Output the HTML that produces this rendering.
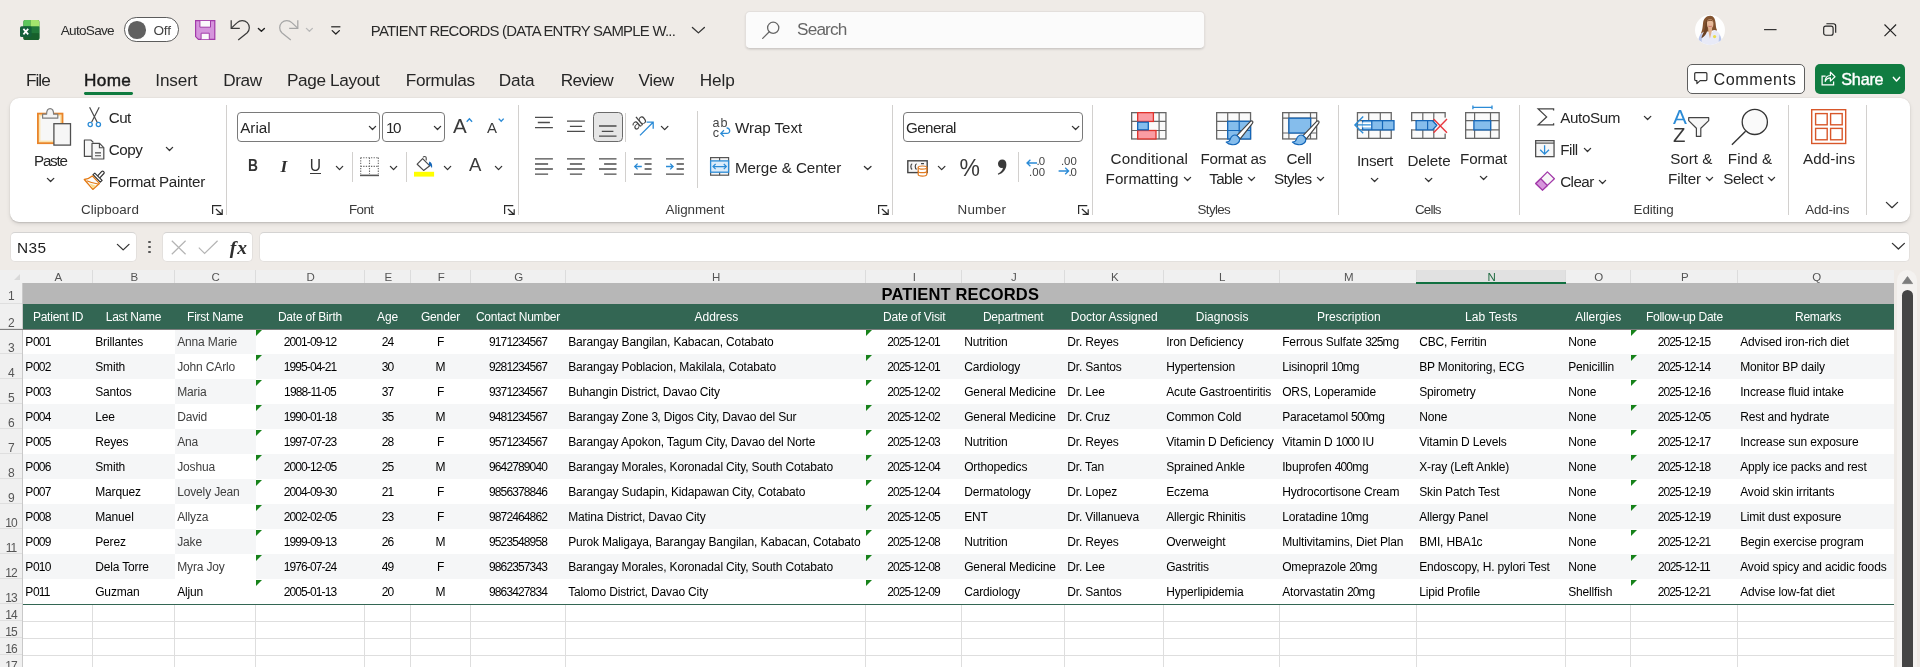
<!DOCTYPE html>
<html lang="en"><head><meta charset="utf-8"><title>PATIENT RECORDS - Excel</title>
<style>
html,body{margin:0;padding:0}
body{will-change:transform;width:1920px;height:667px;overflow:hidden;position:relative;background:#efebe7;font-family:"Liberation Sans",sans-serif;color:#262626}
.t{position:absolute;white-space:nowrap;display:block}
.a{position:absolute;display:block}
svg{position:absolute;overflow:visible}
.sep{position:absolute;width:1px;background:#d6d3d0}
.box{position:absolute;box-sizing:border-box;background:#fff;border:1px solid #8a8886;border-radius:4px}
/* grid */
#grid{position:absolute;left:0;top:270px;width:1920px;height:397px;overflow:hidden}
.ch{position:absolute;top:0;height:13px;line-height:15.5px;font-size:11.5px;color:#555;padding-left:1.5px;text-align:center;background:#f0f0f0;box-sizing:border-box;border-right:1px solid #dcdcdc;overflow:hidden}
.rh{position:absolute;left:0;width:22px;box-sizing:border-box;color:#555;font-size:12px;text-align:center;background:#f0f0f0;border-bottom:1px solid #dfdfdf;letter-spacing:-0.9px}
.rh span{position:absolute;left:0;right:0;bottom:-0.7px;line-height:11px}
.c{position:absolute;box-sizing:border-box;height:25px;line-height:27px;font-size:12px;white-space:nowrap;overflow:hidden;color:#000;padding:0 2.2px;letter-spacing:-0.15px}
.hd{color:#fff;text-align:center;background:#336653}
.ctr{text-align:center}
.band{background:#f5f6f7}
.gc{color:#404040}
.tri{position:absolute;width:0;height:0;border-top:6px solid #17821a;border-right:6px solid transparent}
.gl{position:absolute;background:#dedede}

.c i{font-style:normal;letter-spacing:-0.87px}
.hd{letter-spacing:-0.28px}

</style></head>
<body>
<svg style="left:19.8px;top:20px" width="19.4" height="20" viewBox="0 0 19.4 20" >
<path d="M5.2 0H17.6a1.8 1.8 0 0 1 1.8 1.8V18.2a1.8 1.8 0 0 1-1.8 1.8H5.2a1.8 1.8 0 0 1-1.8-1.8V1.8A1.8 1.8 0 0 1 5.2 0Z" fill="#1e6c30"/>
<path d="M5.2 0H10.6V6.6H3.4V1.8A1.8 1.8 0 0 1 5.2 0Z" fill="#5dc65c"/>
<path d="M10.6 0H17.6a1.8 1.8 0 0 1 1.8 1.8V6.6H10.6Z" fill="#a4e56d"/>
<path d="M10.6 6.6H19.4V13.2H10.6Z" fill="#21793a"/>
<path d="M3.4 13.2H19.4V18.2a1.8 1.8 0 0 1-1.8 1.8H5.2a1.8 1.8 0 0 1-1.8-1.8Z" fill="#17602c"/>
<rect x="0" y="6.2" width="11.6" height="10.8" rx="1.6" fill="#14603a"/>
<path d="M3.4 8.9 L8.2 14.4 M8.2 8.9 L3.4 14.4" stroke="#fff" stroke-width="1.7" fill="none"/>
</svg>
<div class="a" style="left:124px;top:17.2px;width:55px;height:24.4px;box-sizing:border-box;border:1.3px solid #5c5c5c;border-radius:12.2px;background:#fff"></div>
<div class="a" style="left:128.1px;top:21px;width:17.6px;height:17.6px;border-radius:50%;background:#616161"></div>
<svg style="left:194.8px;top:20px" width="20.4" height="20" viewBox="0 0 20.4 20" >
<path d="M0.6 0.6H19.8V19.4H3.4L0.6 16.6Z" fill="#d594dc" stroke="#a23aa9" stroke-width="1.2" stroke-linejoin="miter"/>
<rect x="4.9" y="0.9" width="10.6" height="6.3" fill="#fbf7fb"/>
<rect x="6.1" y="13.2" width="8.2" height="6" fill="#fbf7fb"/>
<path d="M4.9 0.9V7.2H15.5V0.9 M6.1 19.2V13.2H14.3V19.2" fill="none" stroke="#a23aa9" stroke-width="1"/>
</svg>
<svg style="left:230px;top:19px" width="21" height="22" viewBox="0 0 21 22" >
<path d="M1.2 1.2V9.4H9.8" fill="none" stroke="#3a3a3a" stroke-width="1.25" stroke-linejoin="miter"/>
<path d="M1.6 8.9 L7.2 3.6 A7.1 7.1 0 0 1 17.2 13.7 L8.2 20.9" fill="none" stroke="#3a3a3a" stroke-width="1.25" stroke-linecap="butt"/>
</svg>
<svg style="left:258.1px;top:27.6px" width="6.8" height="3.8" viewBox="0 0 6.8 3.8" ><path d="M0.4 0.4 L3.4 3.3 L6.3999999999999995 0.4" fill="none" stroke="#222" stroke-width="1.4" stroke-linecap="round" stroke-linejoin="round"/></svg>
<svg style="left:278px;top:19px" width="21" height="22" viewBox="0 0 21 22" >
<path d="M19.8 1.2V9.4H11.2" fill="none" stroke="#a6a6a6" stroke-width="1.25"/>
<path d="M19.4 8.9 L13.8 3.6 A7.1 7.1 0 0 0 3.8 13.7 L12.8 20.9" fill="none" stroke="#a6a6a6" stroke-width="1.25"/>
</svg>
<svg style="left:305.9px;top:27.6px" width="6.8" height="3.8" viewBox="0 0 6.8 3.8" ><path d="M0.4 0.4 L3.4 3.3 L6.3999999999999995 0.4" fill="none" stroke="#b9b9b9" stroke-width="1.3" stroke-linecap="round" stroke-linejoin="round"/></svg>
<svg style="left:330.6px;top:26.4px" width="9.6" height="9" viewBox="0 0 9.6 9" ><path d="M0.2 0.8H9.4" stroke="#222" stroke-width="1.2"/><path d="M1.2 4.6 L4.8 8 L8.4 4.6" fill="none" stroke="#222" stroke-width="1.3" stroke-linecap="round" stroke-linejoin="round"/></svg>
<svg style="left:691.5px;top:27.2px" width="12.8" height="6.4" viewBox="0 0 12.8 6.4" ><path d="M0.4 0.4 L6.4 5.9 L12.4 0.4" fill="none" stroke="#333" stroke-width="1.3" stroke-linecap="round" stroke-linejoin="round"/></svg>
<div class="a" style="left:745px;top:10.5px;width:459.5px;height:38.5px;box-sizing:border-box;background:#fbfbfb;border:1px solid #e3dfdc;border-bottom-color:#cfcbc8;border-radius:5px;box-shadow:0 1px 2px rgba(0,0,0,0.10)"></div>
<svg style="left:762px;top:21px" width="18" height="18" viewBox="0 0 18 18" ><circle cx="11.2" cy="6.8" r="5.6" fill="none" stroke="#666" stroke-width="1.3"/><path d="M7.3 10.8 L0.7 17.4" stroke="#666" stroke-width="1.3" stroke-linecap="round"/></svg>
<svg style="left:1695.1px;top:15.1px" width="30" height="30" viewBox="0 0 30 30" >
<defs><clipPath id="av"><circle cx="15" cy="15" r="15"/></clipPath></defs>
<g clip-path="url(#av)">
<rect width="30" height="30" fill="#fefefe"/>
<path d="M15.3 0.8C11 0.8 8.4 4 8 8.5C7.6 12.5 7.5 14 6.6 16.5C5.6 19 5.2 21.6 6.4 23.4C8.6 22.2 10.6 19.6 11.6 17L19.4 15C21 15.7 21.9 15.7 22.1 15.2C20.8 13 20.9 10.5 20.6 8C20.2 3.8 18.5 0.8 15.3 0.8Z" fill="#83532f"/>
<path d="M2.6 30C2.8 22 5.4 17.4 11.6 15.7L14.9 19.6L19.4 15.1C24.6 16.7 26.8 21 26.9 30Z" fill="#e8eaf7"/>
<path d="M3.6 25C4 21.6 5.4 19 7.4 17.6L6.6 27ZM24.4 19.4C26 21.6 26.6 24.4 26.6 27.6L23.6 26.6Z" fill="#b9c6ea"/>
<path d="M13 12.6H17.2L16.9 16L14.9 23.8L13.4 16.4Z" fill="#e0b08e"/>
<ellipse cx="15.1" cy="8.8" rx="3.3" ry="4.6" fill="#e7ba9a"/>
<path d="M12.2 6.8C13.6 5.6 16.4 5.4 18 6.6C17.4 4.4 13.2 4 12.2 6.8Z" fill="#7a4a2a"/>
<path d="M13.4 11.2C14.4 11.9 15.8 11.9 16.8 11.2C15.8 11.5 14.4 11.5 13.4 11.2Z" fill="#c56a68" stroke="#c56a68" stroke-width="0.5"/>
<path d="M11.9 4.2C10 8 10.7 13 8.7 17C7.6 19.4 6.4 21.6 6.6 23.3C9.5 21.6 11.7 18.6 12.3 15.5C12.8 13 11.6 9 11.9 4.2Z" fill="#6b4225"/>
<circle cx="19.6" cy="21.6" r="1.6" fill="#e9dc4e"/>
</g></svg>
<svg style="left:1763.5px;top:28.6px" width="13" height="1.4" viewBox="0 0 13 1.4" ><rect width="12.6" height="1.1" y="0.1" fill="#222"/></svg>
<svg style="left:1823px;top:23.3px" width="13.4" height="13" viewBox="0 0 13.4 13" ><rect x="0.7" y="3.1" width="9.4" height="9.2" rx="2" fill="none" stroke="#222" stroke-width="1.15"/><path d="M3.4 0.7H10.4a2.3 2.3 0 0 1 2.3 2.3V9.8" fill="none" stroke="#222" stroke-width="1.15"/></svg>
<svg style="left:1884px;top:23.8px" width="12.6" height="12.6" viewBox="0 0 12.6 12.6" ><path d="M0.5 0.5L12.1 12.1M12.1 0.5L0.5 12.1" stroke="#222" stroke-width="1.15"/></svg>
<div class="a" style="left:84.4px;top:91.8px;width:48.4px;height:2.8px;border-radius:1.4px;background:#0f7b3f"></div>
<div class="a" style="left:1687.2px;top:64.1px;width:117.8px;height:29.5px;box-sizing:border-box;border:1px solid #5e5e5e;border-radius:5px;background:#fff"></div>
<svg style="left:1693.6px;top:72px" width="13.6" height="12.4" viewBox="0 0 13.6 12.4" ><path d="M1.7 0.7H11.9a1 1 0 0 1 1 1V7.6a1 1 0 0 1-1 1H6.1L2.9 11.6V8.6H1.7a1 1 0 0 1-1-1V1.7a1 1 0 0 1 1-1Z" fill="none" stroke="#333" stroke-width="1.2" stroke-linejoin="round"/></svg>
<div class="a" style="left:1815px;top:64.1px;width:90px;height:29.5px;border-radius:5px;background:#107c41"></div>
<svg style="left:1820.6px;top:71.4px" width="14.6" height="14.8" viewBox="0 0 14.6 14.8" ><path d="M4.6 5.2H1.1V14H12.6V10.6" fill="none" stroke="#fff" stroke-width="1.25"/><path d="M4.2 10.4C4.4 6.6 6.6 4.5 9.4 4.5V1.2L14 5.7L9.4 10.1V6.9C7.2 6.9 5.4 8 4.2 10.4Z" fill="none" stroke="#fff" stroke-width="1.2" stroke-linejoin="round"/></svg>
<svg style="left:1893px;top:77.2px" width="7" height="4.4" viewBox="0 0 7 4.4" ><path d="M0.4 0.4 L3.5 3.9000000000000004 L6.6 0.4" fill="none" stroke="#fff" stroke-width="1.5" stroke-linecap="round" stroke-linejoin="round"/></svg>
<div class="a" style="left:10px;top:98px;width:1900px;height:123.5px;background:#fff;border-radius:9px;box-shadow:0 2px 4px rgba(0,0,0,0.10),0 0.5px 1.5px rgba(0,0,0,0.14)"></div>
<svg style="left:46.8px;top:177.6px" width="7.2" height="4" viewBox="0 0 7.2 4" ><path d="M0.4 0.4 L3.6 3.5 L6.8 0.4" fill="none" stroke="#333" stroke-width="1.3" stroke-linecap="round" stroke-linejoin="round"/></svg>
<svg style="left:165.8px;top:147.4px" width="7" height="4" viewBox="0 0 7 4" ><path d="M0.4 0.4 L3.5 3.5 L6.6 0.4" fill="none" stroke="#333" stroke-width="1.3" stroke-linecap="round" stroke-linejoin="round"/></svg>
<div class="sep" style="left:226px;top:105px;height:110.0px;background:#d2d0ce"></div>
<div class="box" style="left:237.3px;top:112.2px;width:142.4px;height:29.6px;border-color:#7a7a7a"></div>
<svg style="left:369.2px;top:125.6px" width="7" height="4" viewBox="0 0 7 4" ><path d="M0.4 0.4 L3.5 3.5 L6.6 0.4" fill="none" stroke="#333" stroke-width="1.3" stroke-linecap="round" stroke-linejoin="round"/></svg>
<div class="box" style="left:382.2px;top:112.2px;width:62.4px;height:29.6px;border-color:#7a7a7a"></div>
<svg style="left:434.2px;top:125.6px" width="7" height="4" viewBox="0 0 7 4" ><path d="M0.4 0.4 L3.5 3.5 L6.6 0.4" fill="none" stroke="#333" stroke-width="1.3" stroke-linecap="round" stroke-linejoin="round"/></svg>
<div class="sep" style="left:352px;top:152.4px;height:29.3px;background:#d2d0ce"></div>
<div class="sep" style="left:406px;top:152.4px;height:29.3px;background:#d2d0ce"></div>
<div class="sep" style="left:518px;top:105px;height:110.0px;background:#d2d0ce"></div>
<div class="a" style="left:593px;top:112.4px;width:29.8px;height:29.4px;box-sizing:border-box;background:#e6e6e6;border:1px solid #6a6a6a;border-radius:4.5px"></div>
<div class="sep" style="left:625px;top:112.5px;height:29.2px;background:#d2d0ce"></div>
<div class="sep" style="left:625px;top:152px;height:30.0px;background:#d2d0ce"></div>
<div class="sep" style="left:697px;top:111px;height:77.0px;background:#d2d0ce"></div>
<svg style="left:863.6px;top:165.6px" width="7.4" height="4" viewBox="0 0 7.4 4" ><path d="M0.4 0.4 L3.7 3.5 L7.0 0.4" fill="none" stroke="#333" stroke-width="1.3" stroke-linecap="round" stroke-linejoin="round"/></svg>
<div class="sep" style="left:892px;top:105px;height:110.0px;background:#d2d0ce"></div>
<div class="box" style="left:903.4px;top:112.4px;width:179.4px;height:29.4px;border-color:#7a7a7a"></div>
<svg style="left:1071.6px;top:125.6px" width="7.2" height="4" viewBox="0 0 7.2 4" ><path d="M0.4 0.4 L3.6 3.5 L6.8 0.4" fill="none" stroke="#333" stroke-width="1.3" stroke-linecap="round" stroke-linejoin="round"/></svg>
<div class="sep" style="left:1018px;top:152px;height:30.0px;background:#d2d0ce"></div>
<div class="sep" style="left:1092px;top:105px;height:110.0px;background:#d2d0ce"></div>
<svg style="left:1183.6px;top:176.6px" width="7" height="4" viewBox="0 0 7 4" ><path d="M0.4 0.4 L3.5 3.5 L6.6 0.4" fill="none" stroke="#333" stroke-width="1.3" stroke-linecap="round" stroke-linejoin="round"/></svg>
<svg style="left:1248.4px;top:176.6px" width="7" height="4" viewBox="0 0 7 4" ><path d="M0.4 0.4 L3.5 3.5 L6.6 0.4" fill="none" stroke="#333" stroke-width="1.3" stroke-linecap="round" stroke-linejoin="round"/></svg>
<svg style="left:1317.2px;top:176.6px" width="7" height="4" viewBox="0 0 7 4" ><path d="M0.4 0.4 L3.5 3.5 L6.6 0.4" fill="none" stroke="#333" stroke-width="1.3" stroke-linecap="round" stroke-linejoin="round"/></svg>
<div class="sep" style="left:1338px;top:105px;height:110.0px;background:#d2d0ce"></div>
<svg style="left:1370.8px;top:177.6px" width="7.2" height="4" viewBox="0 0 7.2 4" ><path d="M0.4 0.4 L3.6 3.5 L6.8 0.4" fill="none" stroke="#333" stroke-width="1.3" stroke-linecap="round" stroke-linejoin="round"/></svg>
<svg style="left:1425px;top:177.6px" width="7.2" height="4" viewBox="0 0 7.2 4" ><path d="M0.4 0.4 L3.6 3.5 L6.8 0.4" fill="none" stroke="#333" stroke-width="1.3" stroke-linecap="round" stroke-linejoin="round"/></svg>
<svg style="left:1479.6px;top:175.8px" width="7.2" height="4" viewBox="0 0 7.2 4" ><path d="M0.4 0.4 L3.6 3.5 L6.8 0.4" fill="none" stroke="#333" stroke-width="1.3" stroke-linecap="round" stroke-linejoin="round"/></svg>
<div class="sep" style="left:1519px;top:105px;height:110.0px;background:#d2d0ce"></div>
<svg style="left:1644px;top:115.6px" width="7.2" height="4" viewBox="0 0 7.2 4" ><path d="M0.4 0.4 L3.6 3.5 L6.8 0.4" fill="none" stroke="#333" stroke-width="1.3" stroke-linecap="round" stroke-linejoin="round"/></svg>
<svg style="left:1584px;top:147.6px" width="7" height="4" viewBox="0 0 7 4" ><path d="M0.4 0.4 L3.5 3.5 L6.6 0.4" fill="none" stroke="#333" stroke-width="1.3" stroke-linecap="round" stroke-linejoin="round"/></svg>
<svg style="left:1599.2px;top:179.6px" width="7" height="4" viewBox="0 0 7 4" ><path d="M0.4 0.4 L3.5 3.5 L6.6 0.4" fill="none" stroke="#333" stroke-width="1.3" stroke-linecap="round" stroke-linejoin="round"/></svg>
<svg style="left:1705.6px;top:176.6px" width="7" height="4" viewBox="0 0 7 4" ><path d="M0.4 0.4 L3.5 3.5 L6.6 0.4" fill="none" stroke="#333" stroke-width="1.3" stroke-linecap="round" stroke-linejoin="round"/></svg>
<svg style="left:1768px;top:176.6px" width="7" height="4" viewBox="0 0 7 4" ><path d="M0.4 0.4 L3.5 3.5 L6.6 0.4" fill="none" stroke="#333" stroke-width="1.3" stroke-linecap="round" stroke-linejoin="round"/></svg>
<div class="sep" style="left:1788px;top:105px;height:110.0px;background:#d2d0ce"></div>
<div class="sep" style="left:1866px;top:105px;height:110.0px;background:#d2d0ce"></div>
<svg style="left:1885.8px;top:202px" width="12" height="6.2" viewBox="0 0 12 6.2" ><path d="M0.4 0.4 L6.0 5.7 L11.6 0.4" fill="none" stroke="#333" stroke-width="1.3" stroke-linecap="round" stroke-linejoin="round"/></svg>
<svg style="left:36px;top:107px" width="36" height="40" viewBox="0 0 36 40" >
<rect x="1.9" y="6.6" width="24.6" height="29.6" fill="#fbe3ae" stroke="#e9842a" stroke-width="1.8"/>
<rect x="4.4" y="9.2" width="19.6" height="24.4" fill="#f7f7f7"/>
<path d="M6.6 11.2V7.2H10.6C10.6 3.4 11.8 1.6 14.1 1.6C16.4 1.6 17.6 3.4 17.6 7.2H21.8V11.2Z" fill="#f4f4f4" stroke="#7d7d7d" stroke-width="1.2" stroke-linejoin="round"/>
<rect x="17.9" y="16.7" width="16.6" height="21.4" fill="#f6f6f6" stroke="#505050" stroke-width="1.3"/>
</svg>
<svg style="left:87px;top:106px" width="15" height="22" viewBox="0 0 15 22" >
<path d="M2.6 1.2L10.2 16.2M12.2 1.2L4.6 16.2" stroke="#4a4a4a" stroke-width="1.2" fill="none"/>
<circle cx="3.2" cy="18.5" r="2.1" fill="#fff" stroke="#2b8bd6" stroke-width="1.3"/>
<circle cx="11.4" cy="18.5" r="2.1" fill="#fff" stroke="#2b8bd6" stroke-width="1.3"/>
</svg>
<svg style="left:83px;top:138.5px" width="22" height="21" viewBox="0 0 22 21" >
<path d="M8.6 17.4H1.4V1H7.8L10.4 3.4" fill="#f7f7f7" stroke="#4a4a4a" stroke-width="1.2" stroke-linejoin="round"/>
<path d="M9 4.4H16.6L20.8 8.6V20H9Z" fill="#f7f7f7" stroke="#4a4a4a" stroke-width="1.2" stroke-linejoin="round"/>
<path d="M16.4 4.6V8.8H20.6" fill="none" stroke="#4a4a4a" stroke-width="1.1"/>
<path d="M12 13.9H18M12 16.7H18" stroke="#4a4a4a" stroke-width="1.1"/>
</svg>
<svg style="left:83px;top:170px" width="22" height="21" viewBox="0 0 22 21" >
<path d="M9.3 5.9C6.6 8.1 3.9 9.2 1.3 9.5L9.8 19.4L16.4 13.4Z" fill="#fbfbfb" stroke="#e47a12" stroke-width="1.3" stroke-linejoin="round"/>
<path d="M6.6 13.6L13 15.8L9.8 18.6Z" fill="#fbdc8c"/>
<path d="M3.6 10.8C7.6 12.6 11.4 13.6 15.2 14" fill="none" stroke="#e47a12" stroke-width="1.1"/>
<path d="M14.6 5.8L18.8 1.4C19.9 0.3 22 2.4 20.9 3.5L16.8 7.9" fill="#fff" stroke="#333" stroke-width="1.2" stroke-linejoin="round"/>
<path d="M10 4.6L11.8 3.1L19.1 10.4L17.3 12.2Z" fill="#fff" stroke="#333" stroke-width="1.2" stroke-linejoin="round"/>
</svg>
<svg style="left:212.3px;top:204.9px" width="11" height="10.4" viewBox="0 0 11 10.4" ><path d="M0.6 9V0.6H9.3" fill="none" stroke="#2a2a2a" stroke-width="1.2"/><path d="M3.9 4L10 9.5M4.6 9.4H10.2V4.2" fill="none" stroke="#2a2a2a" stroke-width="1.2"/></svg>
<svg style="left:504.3px;top:204.9px" width="11" height="10.4" viewBox="0 0 11 10.4" ><path d="M0.6 9V0.6H9.3" fill="none" stroke="#2a2a2a" stroke-width="1.2"/><path d="M3.9 4L10 9.5M4.6 9.4H10.2V4.2" fill="none" stroke="#2a2a2a" stroke-width="1.2"/></svg>
<svg style="left:878.3px;top:204.9px" width="11" height="10.4" viewBox="0 0 11 10.4" ><path d="M0.6 9V0.6H9.3" fill="none" stroke="#2a2a2a" stroke-width="1.2"/><path d="M3.9 4L10 9.5M4.6 9.4H10.2V4.2" fill="none" stroke="#2a2a2a" stroke-width="1.2"/></svg>
<svg style="left:1078.1px;top:204.9px" width="11" height="10.4" viewBox="0 0 11 10.4" ><path d="M0.6 9V0.6H9.3" fill="none" stroke="#2a2a2a" stroke-width="1.2"/><path d="M3.9 4L10 9.5M4.6 9.4H10.2V4.2" fill="none" stroke="#2a2a2a" stroke-width="1.2"/></svg>
<svg style="left:465.6px;top:118.4px" width="7" height="4.4" viewBox="0 0 7 4.4" ><path d="M0.7 3.8L3.4 0.8L6.1 3.8" fill="none" stroke="#2b8bd6" stroke-width="1.4"/></svg>
<svg style="left:497.6px;top:118.4px" width="6.6" height="4" viewBox="0 0 6.6 4" ><path d="M0.7 0.6L3.2 3.3L5.7 0.6" fill="none" stroke="#2b8bd6" stroke-width="1.4"/></svg>
<div class="a" style="left:309.8px;top:173.1px;width:11.4px;height:1.3px;background:#3a3a3a"></div>
<svg style="left:335.9px;top:165.6px" width="7.1" height="4.1" viewBox="0 0 7.1 4.1" ><path d="M0.4 0.4 L3.55 3.5999999999999996 L6.699999999999999 0.4" fill="none" stroke="#333" stroke-width="1.3" stroke-linecap="round" stroke-linejoin="round"/></svg>
<svg style="left:360px;top:157px" width="19" height="19.4" viewBox="0 0 19 19.4" >
<path d="M0.6 0.7H18.4M0.6 9.4H18.4M0.7 0.6V17M9.5 0.6V17M18.3 0.6V17" fill="none" stroke="#6b6b6b" stroke-width="1.1" stroke-dasharray="1.3 1.3"/>
<path d="M0 18.4H19" stroke="#555" stroke-width="1.6"/>
</svg>
<svg style="left:389.5px;top:165.6px" width="7.1" height="4.1" viewBox="0 0 7.1 4.1" ><path d="M0.4 0.4 L3.55 3.5999999999999996 L6.699999999999999 0.4" fill="none" stroke="#333" stroke-width="1.3" stroke-linecap="round" stroke-linejoin="round"/></svg>
<svg style="left:414px;top:156.4px" width="21" height="21" viewBox="0 0 21 21" >
<path d="M9.2 1.6C9.2 0.2 12.2 0.2 12.2 1.8V4.6" fill="none" stroke="#4a4a4a" stroke-width="1.1"/>
<path d="M8.6 2.6L15.8 9.8L9.6 14.4L3.2 8.2Z" fill="#fff" stroke="#4a4a4a" stroke-width="1.2" stroke-linejoin="round"/>
<path d="M15.4 5.4C17.8 6.4 18.6 9 18 12.2C17 10.6 16.2 9.6 14.6 8.6Z" fill="#1466b8"/>
<rect x="0" y="15.8" width="20.1" height="4.8" fill="#ffff00"/>
</svg>
<svg style="left:443.9px;top:165.6px" width="7.1" height="4.1" viewBox="0 0 7.1 4.1" ><path d="M0.4 0.4 L3.55 3.5999999999999996 L6.699999999999999 0.4" fill="none" stroke="#333" stroke-width="1.3" stroke-linecap="round" stroke-linejoin="round"/></svg>
<svg style="left:494.8px;top:165.6px" width="7.1" height="4.1" viewBox="0 0 7.1 4.1" ><path d="M0.4 0.4 L3.55 3.5999999999999996 L6.699999999999999 0.4" fill="none" stroke="#333" stroke-width="1.3" stroke-linecap="round" stroke-linejoin="round"/></svg>
<svg style="left:534.9px;top:116px" width="18" height="18" viewBox="0 0 18 18" ><path d="M0 1.4H17.9M2.8 6.5H14.9M0 11.7H17.9" stroke="#4c4c4c" stroke-width="1.3" fill="none"/></svg>
<svg style="left:567px;top:120px" width="18" height="18" viewBox="0 0 18 18" ><path d="M0 1.2H17.9M2.9 6.3H15.1M0 11.4H17.9" stroke="#4c4c4c" stroke-width="1.3" fill="none"/></svg>
<svg style="left:599.2px;top:124px" width="18" height="18" viewBox="0 0 18 18" ><path d="M0 2H17.5M2.8 7.4H14.4M0 12.2H17.5" stroke="#4c4c4c" stroke-width="1.3" fill="none"/></svg>
<svg style="left:534.9px;top:157px" width="18" height="19" viewBox="0 0 18 19" ><path d="M0 1.9H17.9M0 7H13.1M0 12H17.9M0 17.1H13.1" stroke="#4c4c4c" stroke-width="1.4" fill="none"/></svg>
<svg style="left:567px;top:157px" width="18" height="19" viewBox="0 0 18 19" ><path d="M0 1.9H17.9M2.9 7H15.1M0 12H17.9M2.9 17.1H15.1" stroke="#4c4c4c" stroke-width="1.4" fill="none"/></svg>
<svg style="left:599.2px;top:157px" width="18" height="19" viewBox="0 0 18 19" ><path d="M0 1.9H17.5M5.1 7H17.5M0 12H17.5M5.1 17.1H17.5" stroke="#4c4c4c" stroke-width="1.4" fill="none"/></svg>
<svg style="left:634.2px;top:157px" width="18" height="19" viewBox="0 0 18 19" ><path d="M0 1.9H17.6M10.6 7H17.6M10.6 12H17.6M0 17.1H17.6" stroke="#4c4c4c" stroke-width="1.4" fill="none"/><path d="M7.8 9.5H0.8M3.6 6.6L0.7 9.5L3.6 12.4" fill="none" stroke="#2b8bd6" stroke-width="1.3"/></svg>
<svg style="left:666px;top:157px" width="18" height="19" viewBox="0 0 18 19" ><path d="M0 1.9H17.9M10.6 7H17.9M10.6 12H17.9M0 17.1H17.9" stroke="#4c4c4c" stroke-width="1.4" fill="none"/><path d="M0 9.5H7M4.2 6.6L7.1 9.5L4.2 12.4" fill="none" stroke="#2b8bd6" stroke-width="1.3"/></svg>
<span class="t" style="left:631.4px;top:115px;font-size:14.6px;line-height:15px;color:#444;transform:rotate(-40deg);transform-origin:50% 50%;letter-spacing:-0.5px">ab</span>
<svg style="left:638.6px;top:121px" width="16" height="16" viewBox="0 0 16 16" ><path d="M1 14.4L13.6 1.8M7.6 1.2H14.2V7.8" fill="none" stroke="#2b8bd6" stroke-width="1.3"/></svg>
<svg style="left:660.7px;top:125.5px" width="7.3" height="4.1" viewBox="0 0 7.3 4.1" ><path d="M0.4 0.4 L3.65 3.5999999999999996 L6.8999999999999995 0.4" fill="none" stroke="#333" stroke-width="1.3" stroke-linecap="round" stroke-linejoin="round"/></svg>
<svg style="left:719.6px;top:126.8px" width="11" height="11" viewBox="0 0 11 11" ><path d="M6.6 0.8C10.6 1.2 10.8 6.4 6.8 6.4H1M4 3.2L0.8 6.4L4 9.6" fill="none" stroke="#2b8bd6" stroke-width="1.3"/></svg>
<svg style="left:710px;top:157px" width="19.4" height="19" viewBox="0 0 19.4 19" >
<rect x="0.6" y="0.6" width="18" height="17.6" fill="#f6f6f6" stroke="#555" stroke-width="1.2"/>
<path d="M9.6 0.6V18.2" stroke="#555" stroke-width="1.2"/>
<rect x="0.6" y="3.9" width="18" height="11.3" fill="#dcecfa" stroke="#2b8bd6" stroke-width="1.3"/>
<path d="M3 9.6H16.4M5.6 7L3 9.6L5.6 12.2M13.8 7L16.4 9.6L13.8 12.2" fill="none" stroke="#2b8bd6" stroke-width="1.2"/>
</svg>
<svg style="left:907.4px;top:160.2px" width="22" height="17.4" viewBox="0 0 22 17.4" >
<rect x="0.8" y="0.8" width="19.4" height="11.8" fill="#f6f6f6" stroke="#444" stroke-width="1.4"/>
<path d="M5.2 3.8C3.4 4.4 3.4 8.8 5.2 9.4M9.6 3.8C7.8 4.4 7.8 8.8 9.6 9.4M14 3.6H17" fill="none" stroke="#444" stroke-width="1.2"/>
<path d="M11.2 7.6V14.6C11.2 16.6 19.8 16.6 19.8 14.6V7.6" fill="#fff" stroke="#e07a1f" stroke-width="1.2"/>
<ellipse cx="15.5" cy="7.6" rx="4.3" ry="1.6" fill="#fff" stroke="#e07a1f" stroke-width="1.2"/>
<path d="M11.2 11.2C11.2 13.2 19.8 13.2 19.8 11.2" fill="none" stroke="#e07a1f" stroke-width="1.2"/>
</svg>
<svg style="left:937.7px;top:165.7px" width="7.3" height="4.1" viewBox="0 0 7.3 4.1" ><path d="M0.4 0.4 L3.65 3.5999999999999996 L6.8999999999999995 0.4" fill="none" stroke="#333" stroke-width="1.3" stroke-linecap="round" stroke-linejoin="round"/></svg>
<svg style="left:996.6px;top:159.2px" width="10" height="16.4" viewBox="0 0 10 16.4" ><path d="M5.2 0.5C7.8 0.5 9.4 2.4 9.4 5.4C9.4 10 6.4 14 1.2 15.8L0.8 14.8C3.8 13.4 5.6 11.2 6 8.8C5.6 9 5.2 9 4.8 9C2.6 9 1 7.2 1 4.8C1 2.4 2.8 0.5 5.2 0.5Z" fill="#3a3a3a"/></svg>
<svg style="left:1026px;top:159.4px" width="12" height="8" viewBox="0 0 12 8" ><path d="M11 4H1M4.4 0.8L1 4L4.4 7.2" fill="none" stroke="#2b8bd6" stroke-width="1.3"/></svg>
<svg style="left:1058px;top:167.4px" width="12" height="8" viewBox="0 0 12 8" ><path d="M0.6 4H10.6M7.2 0.8L10.6 4L7.2 7.2" fill="none" stroke="#2b8bd6" stroke-width="1.3"/></svg>
<svg style="left:1131.3px;top:112.2px" width="35.6" height="27.6" viewBox="0 0 35.6 27.6" ><rect x="0.65" y="0.65" width="34.300000000000004" height="26.3" fill="#fafafa" stroke="#666" stroke-width="1.3"/><path d="M6.7 0.6V27.0M28.1 0.6V27.0M0.6 9.3H35.0M0.6 18.5H35.0" stroke="#666" stroke-width="1.2" fill="none"/>
<rect x="6.7" y="0.65" width="15.7" height="8.8" fill="#fa9ca3" stroke="#e0332c" stroke-width="1.3"/>
<rect x="6.7" y="18.5" width="18.3" height="8.45" fill="#fa9ca3" stroke="#e0332c" stroke-width="1.3"/>
<rect x="6.7" y="10.2" width="10.6" height="7.6" fill="#85bdec" stroke="#1466b8" stroke-width="1.3"/>
</svg>
<svg style="left:1215.5px;top:112.2px" width="39" height="35" viewBox="0 0 39 35" ><rect x="0.65" y="0.65" width="33.900000000000006" height="26.3" fill="#fafafa" stroke="#666" stroke-width="1.3"/><path d="M11.7 0.6V27.0M23.2 0.6V27.0M0.6 9.3H34.6M0.6 18.5H34.6" stroke="#666" stroke-width="1.2" fill="none"/>
<rect x="11.7" y="9.3" width="22.85" height="17.65" fill="#85bdec" stroke="#1466b8" stroke-width="1.3"/>
<path d="M23.2 9.3V27M11.7 18.5H34.5" stroke="#1466b8" stroke-width="1.2"/>

<path d="M20.799999999999997 23.6L34.2 9.6C36.0 8.0 37.800000000000004 9.4 36.4 11.4L24.200000000000003 26.799999999999997Z" fill="#fff" stroke="#444" stroke-width="1.2" stroke-linejoin="round"/>
<path d="M20.799999999999997 23.4C17.2 22.0 15.0 24.799999999999997 14.2 27.4C13.6 29.4 12.0 30.0 10.2 30.0C13.2 33.0 18.6 33.8 22.0 31.0C24.200000000000003 29.200000000000003 24.4 26.0 20.799999999999997 23.4Z" fill="#85bdec" stroke="#1466b8" stroke-width="1.2" stroke-linejoin="round"/></svg>
<svg style="left:1282.4px;top:112.2px" width="39" height="35" viewBox="0 0 39 35" ><rect x="0.65" y="0.65" width="34.0" height="26.3" fill="#fafafa" stroke="#666" stroke-width="1.3"/><path d="M6.9 0.6V27.0M28.5 0.6V27.0M0.6 6.2H34.699999999999996M0.6 21H34.699999999999996" stroke="#666" stroke-width="1.2" fill="none"/>
<rect x="6.9" y="6.2" width="21.8" height="14.8" fill="#85bdec" stroke="#1466b8" stroke-width="1.3"/>

<path d="M21.0 23.6L34.4 9.6C36.199999999999996 8.0 38.0 9.4 36.6 11.4L24.400000000000002 26.799999999999997Z" fill="#fff" stroke="#444" stroke-width="1.2" stroke-linejoin="round"/>
<path d="M21.0 23.4C17.4 22.0 15.2 24.799999999999997 14.399999999999999 27.4C13.8 29.4 12.2 30.0 10.399999999999999 30.0C13.399999999999999 33.0 18.8 33.8 22.2 31.0C24.400000000000002 29.200000000000003 24.6 26.0 21.0 23.4Z" fill="#85bdec" stroke="#1466b8" stroke-width="1.2" stroke-linejoin="round"/></svg>
<svg style="left:1353.9px;top:111.9px" width="41" height="27.2" viewBox="0 0 41 27.2" ><g transform="translate(2.8 0)"><rect x="0.65" y="0.65" width="33.800000000000004" height="25.7" fill="#fafafa" stroke="#666" stroke-width="1.3"/><path d="M11.9 0.6V26.4M23.5 0.6V26.4M0.6 8.7H34.5M0.6 17.9H34.5" stroke="#666" stroke-width="1.2" fill="none"/></g>
<rect x="8.6" y="8.7" width="31.4" height="9.2" fill="#85bdec" stroke="#1466b8" stroke-width="1.3"/>
<path d="M28.5 8.7V17.9M17.8 8.7V17.9" stroke="#1466b8" stroke-width="1.2"/>
<path d="M8.4 10.4H17V15.4H8.4Z" fill="#fff"/>
<path d="M9.2 4.6L0.9 12.9L9.2 21.2M1.2 12.9H16.8" fill="none" stroke="#2b8bd6" stroke-width="1.4"/>
</svg>
<svg style="left:1410.9px;top:111.9px" width="37" height="27.2" viewBox="0 0 37 27.2" ><rect x="0.65" y="0.65" width="33.5" height="25.7" fill="#fafafa" stroke="#666" stroke-width="1.3"/><path d="M11.8 0.6V26.4M22.8 0.6V26.4M0.6 8.7H34.199999999999996M0.6 17.9H34.199999999999996" stroke="#666" stroke-width="1.2" fill="none"/>
<rect x="23.6" y="5.6" width="12" height="16" fill="#fafafa"/>
<rect x="-0.4" y="9.4" width="4.6" height="7.8" fill="#fff"/>
<path d="M5.1 8.7H21.6L25.8 13.3L21.6 17.9H5.1Z" fill="#85bdec" stroke="#1466b8" stroke-width="1.3" stroke-linejoin="round"/>
<path d="M16.6 8.7V17.9" stroke="#1466b8" stroke-width="1.2"/>
<path d="M22.6 7L36 20.8M36 7L22.6 20.8" stroke="#e8373e" stroke-width="1.4" fill="none"/>
</svg>
<svg style="left:1464.9px;top:104.9px" width="35" height="34.4" viewBox="0 0 35 34.4" ><path d="M7.8 2.4H27.1M7.9 0.6V4.2M27 0.6V4.2" stroke="#2b8bd6" stroke-width="1.3" fill="none"/><g transform="translate(0 7)"><rect x="0.65" y="0.65" width="33.5" height="25.7" fill="#fafafa" stroke="#666" stroke-width="1.3"/><path d="M9.6 0.6V26.4M25.5 0.6V26.4M0.6 8.7H34.199999999999996M0.6 17.9H34.199999999999996" stroke="#666" stroke-width="1.2" fill="none"/><rect x="8.9" y="8.7" width="16.8" height="9.2" fill="#85bdec" stroke="#1466b8" stroke-width="1.3"/></g></svg>
<svg style="left:1536.6px;top:107.8px" width="18" height="18.4" viewBox="0 0 18 18.4" ><path d="M16.6 2.4V0.9H1.2L9.6 8.9L1.2 16.9H16.6V15.2" fill="none" stroke="#444" stroke-width="1.3" stroke-linejoin="miter"/></svg>
<svg style="left:1535.3px;top:140.2px" width="20" height="17.6" viewBox="0 0 20 17.6" ><rect x="0.65" y="0.65" width="18.4" height="16" fill="#f7f7f7" stroke="#505050" stroke-width="1.3"/><path d="M0.6 3.1H19" stroke="#505050" stroke-width="1.2"/><path d="M9.6 5.2V13.8M5.2 9.8L9.6 14.2L14 9.8" fill="none" stroke="#2b8bd6" stroke-width="1.3"/></svg>
<svg style="left:1534.6px;top:171px" width="21" height="20" viewBox="0 0 21 20" >
<path d="M12.4 0.9L19.4 7.8L7.5 19.1L0.8 12.5Z" fill="#f7f7f7" stroke="#a23aa9" stroke-width="1.3" stroke-linejoin="round"/>
<path d="M0.8 12.5L5.8 7.8L12.4 14.5L7.5 19.1Z" fill="#d695dc" stroke="#a23aa9" stroke-width="1.3" stroke-linejoin="round"/>
</svg>
<svg style="left:1688px;top:117px" width="22" height="21" viewBox="0 0 22 21" ><path d="M0.7 0.7H20.7V3.6L12.8 11.2V19.4H8.4V11.2L0.7 3.6Z" fill="#f7f7f7" stroke="#444" stroke-width="1.2" stroke-linejoin="round"/></svg>
<svg style="left:1730.6px;top:107.6px" width="38.4" height="38" viewBox="0 0 38.4 38" ><circle cx="23.8" cy="13.9" r="12.6" fill="#fafafa" stroke="#333" stroke-width="1.3"/><path d="M14.6 23.2L0.9 36.8" stroke="#333" stroke-width="1.4" fill="none"/></svg>
<svg style="left:1811.3px;top:108.5px" width="35.6" height="35.4" viewBox="0 0 35.6 35.4" >
<rect x="0.7" y="0.7" width="34" height="33.8" fill="none" stroke="#d8572a" stroke-width="1.4"/>
<rect x="4.6" y="4.6" width="11.6" height="11.2" fill="none" stroke="#d8572a" stroke-width="1.4"/>
<rect x="19.6" y="4.6" width="11.6" height="11.2" fill="none" stroke="#d8572a" stroke-width="1.4"/>
<rect x="4.6" y="19.4" width="11.6" height="11.4" fill="none" stroke="#d8572a" stroke-width="1.4"/>
<rect x="19.6" y="19.4" width="11.6" height="11.4" fill="none" stroke="#d8572a" stroke-width="1.4"/>
</svg>
<div class="a" style="left:10px;top:232.4px;width:126.8px;height:29.4px;box-sizing:border-box;background:#fff;border:1px solid #e3e0dd;border-top-color:#d4d3d2;border-radius:5px"></div>
<svg style="left:116.8px;top:244px" width="12.4" height="6.4" viewBox="0 0 12.4 6.4" ><path d="M0.4 0.4 L6.2 5.9 L12.0 0.4" fill="none" stroke="#333" stroke-width="1.3" stroke-linecap="round" stroke-linejoin="round"/></svg>
<div class="a" style="left:148.4px;top:241px;width:2.4px;height:2.4px;border-radius:50%;background:#555;box-shadow:0 5px 0 #555,0 10px 0 #555"></div>
<div class="a" style="left:162.4px;top:232.4px;width:91px;height:29.4px;box-sizing:border-box;background:#fff;border:1px solid #e3e0dd;border-top-color:#d4d3d2;border-radius:5px"></div>
<svg style="left:170.6px;top:240px" width="15.4" height="15" viewBox="0 0 15.4 15" ><path d="M0.8 0.8L14.6 14.2M14.6 0.8L0.8 14.2" stroke="#b4b4b4" stroke-width="1.2" fill="none"/></svg>
<svg style="left:198.2px;top:240.4px" width="20.4" height="14.2" viewBox="0 0 20.4 14.2" ><path d="M0.8 7.6L6.6 13.4L19.6 0.8" stroke="#b4b4b4" stroke-width="1.2" fill="none"/></svg>
<div class="a" style="left:259.4px;top:232.4px;width:1651px;height:29.4px;box-sizing:border-box;background:#fff;border:1px solid #e3e0dd;border-top-color:#d4d3d2;border-radius:5px"></div>
<svg style="left:1892px;top:242.8px" width="12.8" height="6.6" viewBox="0 0 12.8 6.6" ><path d="M0.4 0.4 L6.4 6.1 L12.4 0.4" fill="none" stroke="#333" stroke-width="1.3" stroke-linecap="round" stroke-linejoin="round"/></svg>
<div id="grid">
<div class="a" style="left:23px;top:14px;width:1871px;height:400px;background:#fff"></div>
<div class="a" style="left:0;top:0;width:23px;height:14px;background:#f0f0f0"></div>
<svg style="left:13.5px;top:4px" width="6" height="6" viewBox="0 0 6 6"><path d="M6 0V6H0Z" fill="#d9d9d9"/></svg>
<div class="ch" style="left:23px;width:70px;">A</div>
<div class="ch" style="left:93px;width:82px;">B</div>
<div class="ch" style="left:175px;width:81px;">C</div>
<div class="ch" style="left:256px;width:109px;">D</div>
<div class="ch" style="left:365px;width:46px;">E</div>
<div class="ch" style="left:411px;width:60px;">F</div>
<div class="ch" style="left:471px;width:95px;">G</div>
<div class="ch" style="left:566px;width:300px;">H</div>
<div class="ch" style="left:866px;width:96px;">I</div>
<div class="ch" style="left:962px;width:103px;">J</div>
<div class="ch" style="left:1065px;width:99px;">K</div>
<div class="ch" style="left:1164px;width:116px;">L</div>
<div class="ch" style="left:1280px;width:137px;">M</div>
<div class="ch" style="left:1417px;width:149px;background:#e1e1e1;color:#1e6b41;">N</div>
<div class="ch" style="left:1566px;width:65px;">O</div>
<div class="ch" style="left:1631px;width:107px;">P</div>
<div class="ch" style="left:1738px;width:157px;">Q</div>
<div class="rh" style="top:13px;height:21px"><span style="bottom:1.3px">1</span></div>
<div class="rh" style="top:34px;height:25px"><span>2</span></div>
<div class="rh" style="top:59px;height:25px"><span>3</span></div>
<div class="rh" style="top:84px;height:25px"><span>4</span></div>
<div class="rh" style="top:109px;height:25px"><span>5</span></div>
<div class="rh" style="top:134px;height:25px"><span>6</span></div>
<div class="rh" style="top:159px;height:25px"><span>7</span></div>
<div class="rh" style="top:184px;height:25px"><span>8</span></div>
<div class="rh" style="top:209px;height:25px"><span>9</span></div>
<div class="rh" style="top:234px;height:25px"><span>10</span></div>
<div class="rh" style="top:259px;height:25px"><span>11</span></div>
<div class="rh" style="top:284px;height:25px"><span>12</span></div>
<div class="rh" style="top:309px;height:25px"><span>13</span></div>
<div class="rh" style="top:334px;height:17px"><span>14</span></div>
<div class="rh" style="top:351px;height:17px"><span>15</span></div>
<div class="rh" style="top:368px;height:17px"><span>16</span></div>
<div class="rh" style="top:385px;height:17px"><span>17</span></div>
<div class="rh" style="top:402px;height:17px"><span>18</span></div>
<div class="a" style="left:22px;top:13px;width:1px;height:400px;background:#c9c9c9"></div>
<div class="a" style="left:23px;top:13px;width:1871px;height:21px;background:#b7b7b7"></div>
<div class="a" style="left:1416px;top:12px;width:150px;height:2px;background:#117040"></div>
<div class="a" style="left:23px;top:34px;width:1871px;height:25px;background:#336653"></div>
<div class="a band" style="left:175px;top:59px;width:81px;height:25px"></div>
<div class="c" style="left:23px;top:59px;width:69px">P<i>001</i></div>
<div class="c" style="left:93px;top:59px;width:81px">Brillantes</div>
<div class="c gc" style="left:175px;top:59px;width:80px">Anna Marie</div>
<div class="c ctr" style="left:256px;top:59px;width:108px"><i>2001-09-12</i></div>
<div class="c ctr" style="left:365px;top:59px;width:45px"><i>24</i></div>
<div class="c ctr" style="left:411px;top:59px;width:59px">F</div>
<div class="c ctr" style="left:471px;top:59px;width:94px"><i>9171234567</i></div>
<div class="c" style="left:566px;top:59px;width:299px">Barangay Bangilan, Kabacan, Cotabato</div>
<div class="c ctr" style="left:866px;top:59px;width:95px"><i>2025-12-01</i></div>
<div class="c" style="left:962px;top:59px;width:102px">Nutrition</div>
<div class="c" style="left:1065px;top:59px;width:98px">Dr. Reyes</div>
<div class="c" style="left:1164px;top:59px;width:115px">Iron Deficiency</div>
<div class="c" style="left:1280px;top:59px;width:136px">Ferrous Sulfate <i>325</i>mg</div>
<div class="c" style="left:1417px;top:59px;width:148px">CBC, Ferritin</div>
<div class="c" style="left:1566px;top:59px;width:64px">None</div>
<div class="c ctr" style="left:1631px;top:59px;width:106px"><i>2025-12-15</i></div>
<div class="c" style="left:1738px;top:59px;width:156px">Advised iron-rich diet</div>
<div class="tri" style="left:256px;top:60px"></div>
<div class="tri" style="left:866px;top:60px"></div>
<div class="tri" style="left:1631px;top:60px"></div>
<div class="a band" style="left:23px;top:84px;width:1871px;height:25px"></div>
<div class="a" style="left:175px;top:84px;width:81px;height:25px;background:#fff"></div>
<div class="c" style="left:23px;top:84px;width:69px">P<i>002</i></div>
<div class="c" style="left:93px;top:84px;width:81px">Smith</div>
<div class="c gc" style="left:175px;top:84px;width:80px">John CArlo</div>
<div class="c ctr" style="left:256px;top:84px;width:108px"><i>1995-04-21</i></div>
<div class="c ctr" style="left:365px;top:84px;width:45px"><i>30</i></div>
<div class="c ctr" style="left:411px;top:84px;width:59px">M</div>
<div class="c ctr" style="left:471px;top:84px;width:94px"><i>9281234567</i></div>
<div class="c" style="left:566px;top:84px;width:299px">Barangay Poblacion, Makilala, Cotabato</div>
<div class="c ctr" style="left:866px;top:84px;width:95px"><i>2025-12-01</i></div>
<div class="c" style="left:962px;top:84px;width:102px">Cardiology</div>
<div class="c" style="left:1065px;top:84px;width:98px">Dr. Santos</div>
<div class="c" style="left:1164px;top:84px;width:115px">Hypertension</div>
<div class="c" style="left:1280px;top:84px;width:136px">Lisinopril <i>10</i>mg</div>
<div class="c" style="left:1417px;top:84px;width:148px">BP Monitoring, ECG</div>
<div class="c" style="left:1566px;top:84px;width:64px">Penicillin</div>
<div class="c ctr" style="left:1631px;top:84px;width:106px"><i>2025-12-14</i></div>
<div class="c" style="left:1738px;top:84px;width:156px">Monitor BP daily</div>
<div class="tri" style="left:256px;top:85px"></div>
<div class="tri" style="left:866px;top:85px"></div>
<div class="tri" style="left:1631px;top:85px"></div>
<div class="a band" style="left:175px;top:109px;width:81px;height:25px"></div>
<div class="c" style="left:23px;top:109px;width:69px">P<i>003</i></div>
<div class="c" style="left:93px;top:109px;width:81px">Santos</div>
<div class="c gc" style="left:175px;top:109px;width:80px">Maria</div>
<div class="c ctr" style="left:256px;top:109px;width:108px"><i>1988-11-05</i></div>
<div class="c ctr" style="left:365px;top:109px;width:45px"><i>37</i></div>
<div class="c ctr" style="left:411px;top:109px;width:59px">F</div>
<div class="c ctr" style="left:471px;top:109px;width:94px"><i>9371234567</i></div>
<div class="c" style="left:566px;top:109px;width:299px">Buhangin District, Davao City</div>
<div class="c ctr" style="left:866px;top:109px;width:95px"><i>2025-12-02</i></div>
<div class="c" style="left:962px;top:109px;width:102px">General Medicine</div>
<div class="c" style="left:1065px;top:109px;width:98px">Dr. Lee</div>
<div class="c" style="left:1164px;top:109px;width:115px">Acute Gastroentiritis</div>
<div class="c" style="left:1280px;top:109px;width:136px">ORS, Loperamide</div>
<div class="c" style="left:1417px;top:109px;width:148px">Spirometry</div>
<div class="c" style="left:1566px;top:109px;width:64px">None</div>
<div class="c ctr" style="left:1631px;top:109px;width:106px"><i>2025-12-16</i></div>
<div class="c" style="left:1738px;top:109px;width:156px">Increase fluid intake</div>
<div class="tri" style="left:256px;top:110px"></div>
<div class="tri" style="left:866px;top:110px"></div>
<div class="tri" style="left:1631px;top:110px"></div>
<div class="a band" style="left:23px;top:134px;width:1871px;height:25px"></div>
<div class="a" style="left:175px;top:134px;width:81px;height:25px;background:#fff"></div>
<div class="c" style="left:23px;top:134px;width:69px">P<i>004</i></div>
<div class="c" style="left:93px;top:134px;width:81px">Lee</div>
<div class="c gc" style="left:175px;top:134px;width:80px">David</div>
<div class="c ctr" style="left:256px;top:134px;width:108px"><i>1990-01-18</i></div>
<div class="c ctr" style="left:365px;top:134px;width:45px"><i>35</i></div>
<div class="c ctr" style="left:411px;top:134px;width:59px">M</div>
<div class="c ctr" style="left:471px;top:134px;width:94px"><i>9481234567</i></div>
<div class="c" style="left:566px;top:134px;width:299px">Barangay Zone <i>3</i>, Digos City, Davao del Sur</div>
<div class="c ctr" style="left:866px;top:134px;width:95px"><i>2025-12-02</i></div>
<div class="c" style="left:962px;top:134px;width:102px">General Medicine</div>
<div class="c" style="left:1065px;top:134px;width:98px">Dr. Cruz</div>
<div class="c" style="left:1164px;top:134px;width:115px">Common Cold</div>
<div class="c" style="left:1280px;top:134px;width:136px">Paracetamol <i>500</i>mg</div>
<div class="c" style="left:1417px;top:134px;width:148px">None</div>
<div class="c" style="left:1566px;top:134px;width:64px">None</div>
<div class="c ctr" style="left:1631px;top:134px;width:106px"><i>2025-12-05</i></div>
<div class="c" style="left:1738px;top:134px;width:156px">Rest and hydrate</div>
<div class="tri" style="left:256px;top:135px"></div>
<div class="tri" style="left:866px;top:135px"></div>
<div class="tri" style="left:1631px;top:135px"></div>
<div class="a band" style="left:175px;top:159px;width:81px;height:25px"></div>
<div class="c" style="left:23px;top:159px;width:69px">P<i>005</i></div>
<div class="c" style="left:93px;top:159px;width:81px">Reyes</div>
<div class="c gc" style="left:175px;top:159px;width:80px">Ana</div>
<div class="c ctr" style="left:256px;top:159px;width:108px"><i>1997-07-23</i></div>
<div class="c ctr" style="left:365px;top:159px;width:45px"><i>28</i></div>
<div class="c ctr" style="left:411px;top:159px;width:59px">F</div>
<div class="c ctr" style="left:471px;top:159px;width:94px"><i>9571234567</i></div>
<div class="c" style="left:566px;top:159px;width:299px">Barangay Apokon, Tagum City, Davao del Norte</div>
<div class="c ctr" style="left:866px;top:159px;width:95px"><i>2025-12-03</i></div>
<div class="c" style="left:962px;top:159px;width:102px">Nutrition</div>
<div class="c" style="left:1065px;top:159px;width:98px">Dr. Reyes</div>
<div class="c" style="left:1164px;top:159px;width:115px">Vitamin D Deficiency</div>
<div class="c" style="left:1280px;top:159px;width:136px">Vitamin D <i>1000</i> IU</div>
<div class="c" style="left:1417px;top:159px;width:148px">Vitamin D Levels</div>
<div class="c" style="left:1566px;top:159px;width:64px">None</div>
<div class="c ctr" style="left:1631px;top:159px;width:106px"><i>2025-12-17</i></div>
<div class="c" style="left:1738px;top:159px;width:156px">Increase sun exposure</div>
<div class="tri" style="left:256px;top:160px"></div>
<div class="tri" style="left:866px;top:160px"></div>
<div class="tri" style="left:1631px;top:160px"></div>
<div class="a band" style="left:23px;top:184px;width:1871px;height:25px"></div>
<div class="a" style="left:175px;top:184px;width:81px;height:25px;background:#fff"></div>
<div class="c" style="left:23px;top:184px;width:69px">P<i>006</i></div>
<div class="c" style="left:93px;top:184px;width:81px">Smith</div>
<div class="c gc" style="left:175px;top:184px;width:80px">Joshua</div>
<div class="c ctr" style="left:256px;top:184px;width:108px"><i>2000-12-05</i></div>
<div class="c ctr" style="left:365px;top:184px;width:45px"><i>25</i></div>
<div class="c ctr" style="left:411px;top:184px;width:59px">M</div>
<div class="c ctr" style="left:471px;top:184px;width:94px"><i>9642789040</i></div>
<div class="c" style="left:566px;top:184px;width:299px">Barangay Morales, Koronadal City, South Cotabato</div>
<div class="c ctr" style="left:866px;top:184px;width:95px"><i>2025-12-04</i></div>
<div class="c" style="left:962px;top:184px;width:102px">Orthopedics</div>
<div class="c" style="left:1065px;top:184px;width:98px">Dr. Tan</div>
<div class="c" style="left:1164px;top:184px;width:115px">Sprained Ankle</div>
<div class="c" style="left:1280px;top:184px;width:136px">Ibuprofen <i>400</i>mg</div>
<div class="c" style="left:1417px;top:184px;width:148px">X-ray (Left Ankle)</div>
<div class="c" style="left:1566px;top:184px;width:64px">None</div>
<div class="c ctr" style="left:1631px;top:184px;width:106px"><i>2025-12-18</i></div>
<div class="c" style="left:1738px;top:184px;width:156px">Apply ice packs and rest</div>
<div class="tri" style="left:256px;top:185px"></div>
<div class="tri" style="left:866px;top:185px"></div>
<div class="tri" style="left:1631px;top:185px"></div>
<div class="a band" style="left:175px;top:209px;width:81px;height:25px"></div>
<div class="c" style="left:23px;top:209px;width:69px">P<i>007</i></div>
<div class="c" style="left:93px;top:209px;width:81px">Marquez</div>
<div class="c gc" style="left:175px;top:209px;width:80px">Lovely Jean</div>
<div class="c ctr" style="left:256px;top:209px;width:108px"><i>2004-09-30</i></div>
<div class="c ctr" style="left:365px;top:209px;width:45px"><i>21</i></div>
<div class="c ctr" style="left:411px;top:209px;width:59px">F</div>
<div class="c ctr" style="left:471px;top:209px;width:94px"><i>9856378846</i></div>
<div class="c" style="left:566px;top:209px;width:299px">Barangay Sudapin, Kidapawan City, Cotabato</div>
<div class="c ctr" style="left:866px;top:209px;width:95px"><i>2025-12-04</i></div>
<div class="c" style="left:962px;top:209px;width:102px">Dermatology</div>
<div class="c" style="left:1065px;top:209px;width:98px">Dr. Lopez</div>
<div class="c" style="left:1164px;top:209px;width:115px">Eczema</div>
<div class="c" style="left:1280px;top:209px;width:136px">Hydrocortisone Cream</div>
<div class="c" style="left:1417px;top:209px;width:148px">Skin Patch Test</div>
<div class="c" style="left:1566px;top:209px;width:64px">None</div>
<div class="c ctr" style="left:1631px;top:209px;width:106px"><i>2025-12-19</i></div>
<div class="c" style="left:1738px;top:209px;width:156px">Avoid skin irritants</div>
<div class="tri" style="left:256px;top:210px"></div>
<div class="tri" style="left:866px;top:210px"></div>
<div class="tri" style="left:1631px;top:210px"></div>
<div class="a band" style="left:23px;top:234px;width:1871px;height:25px"></div>
<div class="a" style="left:175px;top:234px;width:81px;height:25px;background:#fff"></div>
<div class="c" style="left:23px;top:234px;width:69px">P<i>008</i></div>
<div class="c" style="left:93px;top:234px;width:81px">Manuel</div>
<div class="c gc" style="left:175px;top:234px;width:80px">Allyza</div>
<div class="c ctr" style="left:256px;top:234px;width:108px"><i>2002-02-05</i></div>
<div class="c ctr" style="left:365px;top:234px;width:45px"><i>23</i></div>
<div class="c ctr" style="left:411px;top:234px;width:59px">F</div>
<div class="c ctr" style="left:471px;top:234px;width:94px"><i>9872464862</i></div>
<div class="c" style="left:566px;top:234px;width:299px">Matina District, Davao City</div>
<div class="c ctr" style="left:866px;top:234px;width:95px"><i>2025-12-05</i></div>
<div class="c" style="left:962px;top:234px;width:102px">ENT</div>
<div class="c" style="left:1065px;top:234px;width:98px">Dr. Villanueva</div>
<div class="c" style="left:1164px;top:234px;width:115px">Allergic Rhinitis</div>
<div class="c" style="left:1280px;top:234px;width:136px">Loratadine <i>10</i>mg</div>
<div class="c" style="left:1417px;top:234px;width:148px">Allergy Panel</div>
<div class="c" style="left:1566px;top:234px;width:64px">None</div>
<div class="c ctr" style="left:1631px;top:234px;width:106px"><i>2025-12-19</i></div>
<div class="c" style="left:1738px;top:234px;width:156px">Limit dust exposure</div>
<div class="tri" style="left:256px;top:235px"></div>
<div class="tri" style="left:866px;top:235px"></div>
<div class="tri" style="left:1631px;top:235px"></div>
<div class="a band" style="left:175px;top:259px;width:81px;height:25px"></div>
<div class="c" style="left:23px;top:259px;width:69px">P<i>009</i></div>
<div class="c" style="left:93px;top:259px;width:81px">Perez</div>
<div class="c gc" style="left:175px;top:259px;width:80px">Jake</div>
<div class="c ctr" style="left:256px;top:259px;width:108px"><i>1999-09-13</i></div>
<div class="c ctr" style="left:365px;top:259px;width:45px"><i>26</i></div>
<div class="c ctr" style="left:411px;top:259px;width:59px">M</div>
<div class="c ctr" style="left:471px;top:259px;width:94px"><i>9523548958</i></div>
<div class="c" style="left:566px;top:259px;width:299px">Purok Maligaya, Barangay Bangilan, Kabacan, Cotabato</div>
<div class="c ctr" style="left:866px;top:259px;width:95px"><i>2025-12-08</i></div>
<div class="c" style="left:962px;top:259px;width:102px">Nutrition</div>
<div class="c" style="left:1065px;top:259px;width:98px">Dr. Reyes</div>
<div class="c" style="left:1164px;top:259px;width:115px">Overweight</div>
<div class="c" style="left:1280px;top:259px;width:136px">Multivitamins, Diet Plan</div>
<div class="c" style="left:1417px;top:259px;width:148px">BMI, HBA<i>1</i>c</div>
<div class="c" style="left:1566px;top:259px;width:64px">None</div>
<div class="c ctr" style="left:1631px;top:259px;width:106px"><i>2025-12-21</i></div>
<div class="c" style="left:1738px;top:259px;width:156px">Begin exercise program</div>
<div class="tri" style="left:256px;top:260px"></div>
<div class="tri" style="left:866px;top:260px"></div>
<div class="tri" style="left:1631px;top:260px"></div>
<div class="a band" style="left:23px;top:284px;width:1871px;height:25px"></div>
<div class="a" style="left:175px;top:284px;width:81px;height:25px;background:#fff"></div>
<div class="c" style="left:23px;top:284px;width:69px">P<i>010</i></div>
<div class="c" style="left:93px;top:284px;width:81px">Dela Torre</div>
<div class="c gc" style="left:175px;top:284px;width:80px">Myra Joy</div>
<div class="c ctr" style="left:256px;top:284px;width:108px"><i>1976-07-24</i></div>
<div class="c ctr" style="left:365px;top:284px;width:45px"><i>49</i></div>
<div class="c ctr" style="left:411px;top:284px;width:59px">F</div>
<div class="c ctr" style="left:471px;top:284px;width:94px"><i>9862357343</i></div>
<div class="c" style="left:566px;top:284px;width:299px">Barangay Morales, Koronadal City, South Cotabato</div>
<div class="c ctr" style="left:866px;top:284px;width:95px"><i>2025-12-08</i></div>
<div class="c" style="left:962px;top:284px;width:102px">General Medicine</div>
<div class="c" style="left:1065px;top:284px;width:98px">Dr. Lee</div>
<div class="c" style="left:1164px;top:284px;width:115px">Gastritis</div>
<div class="c" style="left:1280px;top:284px;width:136px">Omeprazole <i>20</i>mg</div>
<div class="c" style="left:1417px;top:284px;width:148px">Endoscopy, H. pylori Test</div>
<div class="c" style="left:1566px;top:284px;width:64px">None</div>
<div class="c ctr" style="left:1631px;top:284px;width:106px"><i>2025-12-11</i></div>
<div class="c" style="left:1738px;top:284px;width:156px">Avoid spicy and acidic foods</div>
<div class="tri" style="left:256px;top:285px"></div>
<div class="tri" style="left:866px;top:285px"></div>
<div class="tri" style="left:1631px;top:285px"></div>
<div class="c" style="left:23px;top:309px;width:69px">P<i>011</i></div>
<div class="c" style="left:93px;top:309px;width:81px">Guzman</div>
<div class="c" style="left:175px;top:309px;width:80px">Aljun</div>
<div class="c ctr" style="left:256px;top:309px;width:108px"><i>2005-01-13</i></div>
<div class="c ctr" style="left:365px;top:309px;width:45px"><i>20</i></div>
<div class="c ctr" style="left:411px;top:309px;width:59px">M</div>
<div class="c ctr" style="left:471px;top:309px;width:94px"><i>9863427834</i></div>
<div class="c" style="left:566px;top:309px;width:299px">Talomo District, Davao City</div>
<div class="c ctr" style="left:866px;top:309px;width:95px"><i>2025-12-09</i></div>
<div class="c" style="left:962px;top:309px;width:102px">Cardiology</div>
<div class="c" style="left:1065px;top:309px;width:98px">Dr. Santos</div>
<div class="c" style="left:1164px;top:309px;width:115px">Hyperlipidemia</div>
<div class="c" style="left:1280px;top:309px;width:136px">Atorvastatin <i>20</i>mg</div>
<div class="c" style="left:1417px;top:309px;width:148px">Lipid Profile</div>
<div class="c" style="left:1566px;top:309px;width:64px">Shellfish</div>
<div class="c ctr" style="left:1631px;top:309px;width:106px"><i>2025-12-21</i></div>
<div class="c" style="left:1738px;top:309px;width:156px">Advise low-fat diet</div>
<div class="tri" style="left:256px;top:310px"></div>
<div class="tri" style="left:866px;top:310px"></div>
<div class="tri" style="left:1631px;top:310px"></div>
<div class="a" style="left:0;top:59px;width:1894px;height:1px;background:#7f7f7f"></div>
<div class="a" style="left:23px;top:334px;width:1871px;height:1px;background:#336653"></div>
<div class="gl" style="left:92px;top:335px;width:1px;height:80px"></div>
<div class="gl" style="left:174px;top:335px;width:1px;height:80px"></div>
<div class="gl" style="left:255px;top:335px;width:1px;height:80px"></div>
<div class="gl" style="left:364px;top:335px;width:1px;height:80px"></div>
<div class="gl" style="left:410px;top:335px;width:1px;height:80px"></div>
<div class="gl" style="left:470px;top:335px;width:1px;height:80px"></div>
<div class="gl" style="left:565px;top:335px;width:1px;height:80px"></div>
<div class="gl" style="left:865px;top:335px;width:1px;height:80px"></div>
<div class="gl" style="left:961px;top:335px;width:1px;height:80px"></div>
<div class="gl" style="left:1064px;top:335px;width:1px;height:80px"></div>
<div class="gl" style="left:1163px;top:335px;width:1px;height:80px"></div>
<div class="gl" style="left:1279px;top:335px;width:1px;height:80px"></div>
<div class="gl" style="left:1416px;top:335px;width:1px;height:80px"></div>
<div class="gl" style="left:1565px;top:335px;width:1px;height:80px"></div>
<div class="gl" style="left:1630px;top:335px;width:1px;height:80px"></div>
<div class="gl" style="left:1737px;top:335px;width:1px;height:80px"></div>
<div class="gl" style="left:1894px;top:335px;width:1px;height:80px"></div>
<div class="gl" style="left:23px;top:351px;width:1871px;height:1px"></div>
<div class="gl" style="left:23px;top:368px;width:1871px;height:1px"></div>
<div class="gl" style="left:23px;top:385px;width:1871px;height:1px"></div>
<div class="gl" style="left:23px;top:402px;width:1871px;height:1px"></div>
<div class="gl" style="left:23px;top:419px;width:1871px;height:1px"></div>
<div class="a" style="left:1894px;top:0;width:26px;height:400px;background:#efebe7"></div>
<div class="a" style="left:1897px;top:0px;width:20px;height:420px;background:#f4f2f0;border-radius:10px"></div>
<svg style="left:1902px;top:6px" width="11" height="8" viewBox="0 0 11 8"><path d="M5.5 0.6 L10.6 7.6 H0.4Z" fill="#7c7c7c" stroke="#7c7c7c" stroke-width="0.8" stroke-linejoin="round"/></svg>
<div class="a" style="left:1902px;top:20px;width:11px;height:420px;background:#454545;border-radius:5.5px"></div>
</div>
<!-- labels -->
<span class="t" style="left:60.7px;top:23px;font-size:13.6px;line-height:15px;color:#2b2b2b;letter-spacing:-0.71px;">AutoSave</span><span class="t" style="left:153.5px;top:23px;font-size:13.6px;line-height:15px;color:#444;letter-spacing:-0.20px;">Off</span><span class="t" style="left:370.8px;top:23px;font-size:14.9px;line-height:16px;color:#2a2a2a;letter-spacing:-0.74px;">PATIENT RECORDS (DATA ENTRY SAMPLE W...</span><span class="t" style="left:797.1px;top:19px;font-size:17.2px;line-height:20px;color:#666;letter-spacing:-0.87px;">Search</span><span class="t" style="left:25.9px;top:70px;font-size:17.2px;line-height:20px;color:#262626;letter-spacing:-0.93px;">File</span><span class="t" style="left:84.0px;top:70px;font-size:17.2px;line-height:20px;color:#1b1b1b;letter-spacing:0.35px;-webkit-text-stroke:0.45px #1b1b1b;">Home</span><span class="t" style="left:155.3px;top:70px;font-size:17.2px;line-height:20px;color:#262626;letter-spacing:-0.16px;">Insert</span><span class="t" style="left:223.2px;top:70px;font-size:17.2px;line-height:20px;color:#262626;letter-spacing:-0.37px;">Draw</span><span class="t" style="left:286.9px;top:70px;font-size:17.2px;line-height:20px;color:#262626;letter-spacing:-0.36px;">Page Layout</span><span class="t" style="left:405.8px;top:70px;font-size:17.2px;line-height:20px;color:#262626;letter-spacing:-0.32px;">Formulas</span><span class="t" style="left:498.8px;top:70px;font-size:17.2px;line-height:20px;color:#262626;letter-spacing:-0.17px;">Data</span><span class="t" style="left:560.8px;top:70px;font-size:17.2px;line-height:20px;color:#262626;letter-spacing:-0.71px;">Review</span><span class="t" style="left:638.6px;top:70px;font-size:17.2px;line-height:20px;color:#262626;letter-spacing:-0.45px;">View</span><span class="t" style="left:699.8px;top:70px;font-size:17.2px;line-height:20px;color:#262626;letter-spacing:-0.15px;">Help</span><span class="t" style="left:1713.4px;top:70px;font-size:16.2px;line-height:18px;color:#242424;letter-spacing:0.60px;">Comments</span><span class="t" style="left:1841.3px;top:70px;font-size:16.2px;line-height:18px;color:#fff;letter-spacing:-0.23px;-webkit-text-stroke:0.4px #fff;">Share</span><span class="t" style="left:34.0px;top:152px;font-size:15.2px;line-height:17px;color:#262626;letter-spacing:-1.24px;">Paste</span><span class="t" style="left:108.8px;top:109px;font-size:15.2px;line-height:17px;color:#262626;letter-spacing:-0.62px;">Cut</span><span class="t" style="left:108.8px;top:141px;font-size:15.2px;line-height:17px;color:#262626;letter-spacing:-0.46px;">Copy</span><span class="t" style="left:108.8px;top:173px;font-size:15.2px;line-height:17px;color:#262626;letter-spacing:-0.31px;">Format Painter</span><span class="t" style="left:80.9px;top:202px;font-size:13.4px;line-height:15px;color:#3a3a3a;letter-spacing:0.08px;">Clipboard</span><span class="t" style="left:240.2px;top:119px;font-size:15.2px;line-height:17px;color:#262626;">Arial</span><span class="t" style="left:386.1px;top:119px;font-size:15.2px;line-height:17px;color:#262626;letter-spacing:-1.50px;">10</span><span class="t" style="left:349.0px;top:202px;font-size:13.4px;line-height:15px;color:#3a3a3a;letter-spacing:-0.60px;">Font</span><span class="t" style="left:734.9px;top:119px;font-size:15.2px;line-height:17px;color:#262626;letter-spacing:-0.06px;">Wrap Text</span><span class="t" style="left:734.9px;top:159px;font-size:15.2px;line-height:17px;color:#262626;letter-spacing:-0.07px;">Merge &amp; Center</span><span class="t" style="left:665.6px;top:202px;font-size:13.4px;line-height:15px;color:#3a3a3a;letter-spacing:-0.09px;">Alignment</span><span class="t" style="left:906.0px;top:119px;font-size:15.2px;line-height:17px;color:#262626;letter-spacing:-0.61px;">General</span><span class="t" style="left:957.6px;top:202px;font-size:13.4px;line-height:15px;color:#3a3a3a;letter-spacing:0.13px;">Number</span><span class="t" style="left:1110.6px;top:150px;font-size:15.2px;line-height:17px;color:#262626;letter-spacing:0.14px;">Conditional</span><span class="t" style="left:1105.6px;top:170px;font-size:15.2px;line-height:17px;color:#262626;letter-spacing:0.02px;">Formatting</span><span class="t" style="left:1200.6px;top:150px;font-size:15.2px;line-height:17px;color:#262626;letter-spacing:-0.34px;">Format as</span><span class="t" style="left:1209.2px;top:170px;font-size:15.2px;line-height:17px;color:#262626;letter-spacing:-0.58px;">Table</span><span class="t" style="left:1286.6px;top:150px;font-size:15.2px;line-height:17px;color:#262626;letter-spacing:-0.26px;">Cell</span><span class="t" style="left:1274.1px;top:170px;font-size:15.2px;line-height:17px;color:#262626;letter-spacing:-0.69px;">Styles</span><span class="t" style="left:1197.6px;top:202px;font-size:13.4px;line-height:15px;color:#3a3a3a;letter-spacing:-0.67px;">Styles</span><span class="t" style="left:1357.0px;top:152px;font-size:15.2px;line-height:17px;color:#262626;letter-spacing:-0.36px;">Insert</span><span class="t" style="left:1407.4px;top:152px;font-size:15.2px;line-height:17px;color:#262626;letter-spacing:-0.14px;">Delete</span><span class="t" style="left:1460.1px;top:150px;font-size:15.2px;line-height:17px;color:#262626;letter-spacing:-0.20px;">Format</span><span class="t" style="left:1415.0px;top:202px;font-size:13.4px;line-height:15px;color:#3a3a3a;letter-spacing:-0.82px;">Cells</span><span class="t" style="left:1560.2px;top:109px;font-size:15.2px;line-height:17px;color:#262626;letter-spacing:-0.36px;">AutoSum</span><span class="t" style="left:1560.2px;top:141px;font-size:15.2px;line-height:17px;color:#262626;letter-spacing:-0.47px;">Fill</span><span class="t" style="left:1560.2px;top:173px;font-size:15.2px;line-height:17px;color:#262626;letter-spacing:-0.57px;">Clear</span><span class="t" style="left:1670.2px;top:150px;font-size:15.2px;line-height:17px;color:#262626;">Sort &amp;</span><span class="t" style="left:1668.1px;top:170px;font-size:15.2px;line-height:17px;color:#262626;letter-spacing:-0.17px;">Filter</span><span class="t" style="left:1727.8px;top:150px;font-size:15.2px;line-height:17px;color:#262626;letter-spacing:0.10px;">Find &amp;</span><span class="t" style="left:1723.2px;top:170px;font-size:15.2px;line-height:17px;color:#262626;letter-spacing:-0.40px;">Select</span><span class="t" style="left:1633.6px;top:202px;font-size:13.4px;line-height:15px;color:#3a3a3a;letter-spacing:-0.14px;">Editing</span><span class="t" style="left:1803.0px;top:150px;font-size:15.2px;line-height:17px;color:#262626;letter-spacing:0.08px;">Add-ins</span><span class="t" style="left:1805.2px;top:202px;font-size:13.4px;line-height:15px;color:#3a3a3a;letter-spacing:-0.17px;">Add-ins</span><span class="t" style="left:452.9px;top:114px;font-size:20.6px;line-height:23px;color:#3a3a3a;letter-spacing:0.45px;">A</span><span class="t" style="left:486.9px;top:119px;font-size:15px;line-height:17px;color:#3a3a3a;letter-spacing:1.48px;">A</span><span class="t" style="left:247.5px;top:157px;font-size:16px;line-height:17px;color:#333;font-weight:700;letter-spacing:-0.64px;transform:scaleX(0.86);transform-origin:0 50%;">B</span><span class="t" style="left:280.6px;top:156px;font-size:17.4px;line-height:20px;color:#2e2e2e;font-weight:700;letter-spacing:0.22px;font-family:'Liberation Serif',serif;font-style:italic;">I</span><span class="t" style="left:309.8px;top:157px;font-size:15.6px;line-height:17px;color:#333;letter-spacing:-0.07px;">U</span><span class="t" style="left:469.1px;top:154px;font-size:18.6px;line-height:21px;color:#3a3a3a;letter-spacing:-0.11px;">A</span><span class="t" style="left:712.6px;top:116px;font-size:12.6px;line-height:14px;color:#444;letter-spacing:0.98px;">ab</span><span class="t" style="left:712.8px;top:126px;font-size:12.6px;line-height:14px;color:#444;letter-spacing:-0.20px;">c</span><span class="t" style="left:959.4px;top:155px;font-size:23px;line-height:26px;color:#3a3a3a;letter-spacing:-1.15px;">%</span><span class="t" style="left:1036.4px;top:155px;font-size:11.4px;line-height:12px;color:#444;letter-spacing:-0.90px;">.0</span><span class="t" style="left:1029.1px;top:166px;font-size:11.4px;line-height:12px;color:#444;letter-spacing:0.03px;">.00</span><span class="t" style="left:1060.9px;top:155px;font-size:11.4px;line-height:12px;color:#444;letter-spacing:0.03px;">.00</span><span class="t" style="left:1068.4px;top:166px;font-size:11.4px;line-height:12px;color:#444;letter-spacing:-1.10px;">.0</span><span class="t" style="left:1672.9px;top:105px;font-size:20.8px;line-height:23px;color:#2b8bd6;letter-spacing:-0.78px;">A</span><span class="t" style="left:1673.1px;top:124px;font-size:20.4px;line-height:22px;color:#3a3a3a;letter-spacing:-0.57px;">Z</span><span class="t" style="left:16.9px;top:239px;font-size:15.4px;line-height:17px;color:#1c1c1c;letter-spacing:0.53px;">N35</span><span class="t" style="left:229.8px;top:237px;font-size:19.5px;line-height:22px;color:#2e2e2e;font-weight:700;letter-spacing:0.95px;font-family:'Liberation Serif',serif;font-style:italic;">fx</span><span class="t" style="left:881.6px;top:285px;font-size:16.5px;line-height:18px;color:#000;font-weight:700;letter-spacing:0.15px;">PATIENT RECORDS</span><span class="t" style="left:32.9px;top:310px;font-size:12px;line-height:14px;color:#fff;letter-spacing:-0.23px;">Patient ID</span><span class="t" style="left:105.8px;top:310px;font-size:12px;line-height:14px;color:#fff;letter-spacing:-0.30px;">Last Name</span><span class="t" style="left:187.1px;top:310px;font-size:12px;line-height:14px;color:#fff;letter-spacing:-0.26px;">First Name</span><span class="t" style="left:277.9px;top:310px;font-size:12px;line-height:14px;color:#fff;letter-spacing:-0.20px;">Date of Birth</span><span class="t" style="left:377.1px;top:310px;font-size:12px;line-height:14px;color:#fff;letter-spacing:-0.13px;">Age</span><span class="t" style="left:420.9px;top:310px;font-size:12px;line-height:14px;color:#fff;letter-spacing:-0.14px;">Gender</span><span class="t" style="left:475.9px;top:310px;font-size:12px;line-height:14px;color:#fff;letter-spacing:-0.23px;">Contact Number</span><span class="t" style="left:694.6px;top:310px;font-size:12px;line-height:14px;color:#fff;letter-spacing:-0.07px;">Address</span><span class="t" style="left:882.9px;top:310px;font-size:12px;line-height:14px;color:#fff;letter-spacing:-0.14px;">Date of Visit</span><span class="t" style="left:982.9px;top:310px;font-size:12px;line-height:14px;color:#fff;letter-spacing:-0.23px;">Department</span><span class="t" style="left:1070.8px;top:310px;font-size:12px;line-height:14px;color:#fff;letter-spacing:-0.04px;">Doctor Assigned</span><span class="t" style="left:1195.8px;top:310px;font-size:12px;line-height:14px;color:#fff;letter-spacing:-0.01px;">Diagnosis</span><span class="t" style="left:1317.0px;top:310px;font-size:12px;line-height:14px;color:#fff;letter-spacing:0.02px;">Prescription</span><span class="t" style="left:1464.9px;top:310px;font-size:12px;line-height:14px;color:#fff;letter-spacing:0.16px;">Lab Tests</span><span class="t" style="left:1575.3px;top:310px;font-size:12px;line-height:14px;color:#fff;letter-spacing:-0.02px;">Allergies</span><span class="t" style="left:1646.0px;top:310px;font-size:12px;line-height:14px;color:#fff;letter-spacing:-0.28px;">Follow-up Date</span><span class="t" style="left:1795.0px;top:310px;font-size:12px;line-height:14px;color:#fff;letter-spacing:-0.29px;">Remarks</span>
</body></html>
